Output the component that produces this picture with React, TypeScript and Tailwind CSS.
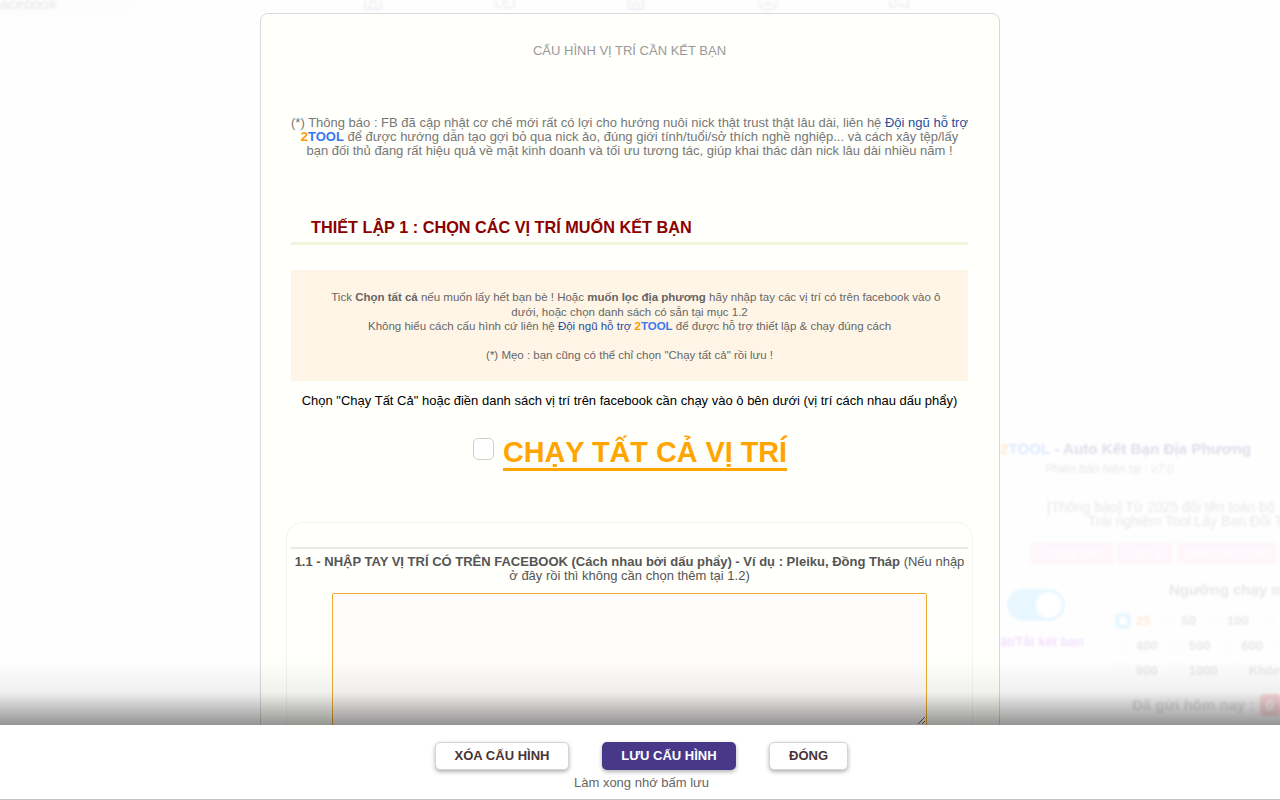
import { Home, Youtube, Store, Smile, Gamepad2 } from 'lucide-react'

const NGUONG = [
  ['25', '50', '100', '200'],
  ['400', '500', '600', '700'],
  ['900', '1000', 'Không'],
]

function NenTrang() {
  return (
    <div className="h-[800px] overflow-hidden bg-[#fefcfe] blur-[1px] opacity-[0.16]">
      <div className="h-[20px] w-[135px] rounded-br-[20px] bg-gray-100 text-[15px] leading-[8px] text-gray-500">acebook</div>
      <div className="flex justify-between w-[548px] ml-[362px] -mt-[20px] text-gray-400">
        <Home className="w-[22px] h-[22px] -mt-[10px]" />
        <Youtube className="w-[22px] h-[22px] -mt-[10px]" />
        <Store className="w-[22px] h-[22px] -mt-[10px]" />
        <Smile className="w-[22px] h-[22px] -mt-[10px]" />
        <Gamepad2 className="w-[22px] h-[22px] -mt-[10px]" />
      </div>
      <div className="w-[1280px] pl-[1000px] pt-[428px]">
        <div className="w-[500px]">
          <div className="text-[15.2px] leading-[18px] font-bold text-[#3a2a7a] whitespace-nowrap">
            <span className="text-orange-400">2</span>
            <span className="text-blue-500">TOOL</span> - Auto Kết Bạn Địa Phương
          </div>
          <div className="text-[12px] leading-[14px] italic text-gray-500 ml-[45px] mt-[4px]">Phiên bản hiện tại : v7.0</div>
          <div className="text-[14px] leading-[14px] text-gray-500 mt-[24px] ml-[47px] whitespace-nowrap">
            [Thông báo] Từ 2025 đổi tên toàn bộ tool
          </div>
          <div className="text-[14px] leading-[14px] text-gray-500 ml-[88px] whitespace-nowrap">
            Trải nghiệm Tool Lấy Bạn Đối Thủ
          </div>
          <div className="flex gap-[4px] ml-[30px] mt-[14px] text-[13px] text-white">
            <span className="bg-pink-200 w-[83px] h-[22px] flex items-center justify-center">Thông báo</span>
            <span className="bg-pink-200 w-[56px] h-[22px] flex items-center justify-center">Gợi ý</span>
            <span className="bg-pink-200 w-[100px] h-[22px] flex items-center justify-center">Danh sách bạn</span>
          </div>
          <div className="flex mt-[16px]">
            <div className="w-[115px] pl-[7px] pt-[9px]">
              <div className="w-[58px] h-[32px] rounded-full bg-sky-300 flex justify-end items-center pr-[3px]">
                <div className="w-[26px] h-[26px] rounded-full bg-white" />
              </div>
              <div className="text-[13px] font-bold text-purple-500 -ml-[7px] mt-[11px] whitespace-nowrap">ật/Tắt kết bạn</div>
            </div>
            <div className="pt-[1px]">
              <div className="text-[15px] leading-[18px] font-bold text-gray-500 ml-[54px] whitespace-nowrap">Ngưỡng chạy mỗi</div>
              <div className="flex flex-col gap-[9px] mt-[14px]">
                {NGUONG.map((hang) => (
                  <div key={hang[0]} className="flex gap-[10px] text-[13px] leading-[16px] font-bold text-gray-500">
                    {hang.map((n) =>
                      n === '25' ? (
                        <span key={n} className="flex items-center gap-[5px] text-orange-400">
                          <span className="w-[16px] h-[16px] rounded bg-sky-300 flex items-center justify-center">
                            <span className="w-[8px] h-[8px] rounded-full bg-white" />
                          </span>
                          {n}
                        </span>
                      ) : (
                        <span key={n} className="flex items-center gap-[5px]">
                          <span className="w-[16px] h-[16px] rounded bg-gray-100" />
                          {n}
                        </span>
                      ),
                    )}
                  </div>
                ))}
              </div>
            </div>
          </div>
          <div className="flex items-center gap-[5px] ml-[132px] mt-[15px] text-[15px] leading-[22px] font-bold text-gray-700 whitespace-nowrap">
            Đã gửi hôm nay : <span className="bg-red-500 text-white px-[6px] rounded">0</span>
          </div>
        </div>
      </div>
    </div>
  )
}

function HoTro() {
  return (
    <>
      <span className="text-[#1f4e9e]">Đội ngũ hỗ trợ</span>{' '}
      <span className="font-bold">
        <span className="text-[#ff9900]">2</span>
        <span className="text-[#3b78f0]">TOOL</span>
      </span>
    </>
  )
}

function NutDuoi({ chu, rong, dam }: { chu: string; rong: string; dam?: boolean }) {
  return (
    <button
      className={
        dam
          ? `h-[28px] ${rong} rounded-[5px] bg-[#47388a] text-white text-[13px] font-bold shadow-[0_2px_4px_rgba(0,0,0,0.3)]`
          : `h-[28px] ${rong} rounded-[5px] bg-white border border-[#d4d4d4] text-[#4a3434] text-[13px] font-bold shadow-[0_2px_4px_rgba(0,0,0,0.3)]`
      }
    >
      {chu}
    </button>
  )
}

export default function App() {
  return (
    <div className="relative h-[800px] w-[1280px] overflow-hidden font-['Liberation_Sans',Arial,sans-serif]">
      <NenTrang />

      {/* Modal cấu hình */}
      <div className="absolute left-[260px] top-[13px] w-[740px] h-[800px] bg-[#fffffb] border border-[#d9d9d9] rounded-[8px] pl-[30px] pr-[31px]">
        <h2 className="text-[13px] leading-[16px] text-[#999999] text-center pt-[29px]">CẤU HÌNH VỊ TRÍ CẦN KẾT BẠN</h2>

        <p className="mt-[57px] text-[13px] leading-[14px] text-[#777777] text-center">
          (*) Thông báo : FB đã cập nhật cơ chế mới rất có lợi cho hướng nuôi nick thật trust thật lâu dài, liên hệ{' '}
          <HoTro /> để được hướng dẫn tạo gợi bỏ qua nick ảo, đúng giới tính/tuổi/sở thích nghề nghiệp... và cách xây
          tệp/lấy bạn đối thủ đang rất hiệu quả về mặt kinh doanh và tối ưu tương tác, giúp khai thác dàn nick lâu dài
          nhiều năm !
        </p>

        <div className="mt-[59px] border-b-[3px] border-[#f3f4dc] pb-[5px] pl-[20px]">
          <h3 className="text-[16.25px] leading-[20px] font-bold text-[#8b0000]">THIẾT LẬP 1 : CHỌN CÁC VỊ TRÍ MUỐN KẾT BẠN</h3>
        </div>

        <div className="mt-[25px] h-[111px] bg-[#fff5e6] px-[25px] pt-[20px] text-[11.5px] leading-[14.5px] text-[#666666] text-center">
          {'\u00a0\u00a0\u00a0\u00a0'}Tick <b>Chọn tất cả</b> nếu muốn lấy hết bạn bè ! Hoặc <b>muốn lọc địa phương</b> hãy nhập tay các vị trí có
          trên facebook vào ô dưới, hoặc chọn danh sách có sẵn tại mục 1.2
          <br />
          Không hiểu cách cấu hình cứ liên hệ <HoTro /> để được hỗ trợ thiết lập &amp; chạy đúng cách
          <br />
          <br />
          (*) Mẹo : bạn cũng có thể chỉ chọn "Chạy tất cả" rồi lưu !
        </div>

        <p className="mt-[12px] text-[13px] leading-[16px] text-black text-center whitespace-nowrap">
          Chọn "Chạy Tất Cả" hoặc điền danh sách vị trí trên facebook cần chạy vào ô bên dưới (vị trí cách nhau dấu phẩy)
        </p>

        <div className="mt-[28px] flex justify-center items-start gap-[9px] pl-[1px]">
          <span className="mt-[1px] w-[21px] h-[22px] rounded-[5px] bg-white border border-[#cfcfcf]" />
          <span className="text-[28.8px] leading-[31px] font-bold text-[#ffa500] border-b-[3px] border-[#ffa500] whitespace-nowrap">
            CHẠY TẤT CẢ VỊ TRÍ
          </span>
        </div>

        <div className="mt-[51px] -mx-[5px] h-[300px] rounded-[16px] border border-[#f3f3f3] px-[4px] pt-[24px]">
          <div className="border-t-2 border-[#e9e9e9] pt-[6px] text-[13px] leading-[14px] text-[#555555] text-center">
            <b>1.1 - NHẬP TAY VỊ TRÍ CÓ TRÊN FACEBOOK (Cách nhau bởi dấu phẩy) - Ví dụ : Pleiku, Đồng Tháp</b> (Nếu nhập ở
            đây rồi thì không cần chọn thêm tại 1.2)
          </div>
          <textarea className="block mx-auto mt-[10px] w-[595px] h-[133px] bg-[#fffcfb] border border-[#f0ab2e] rounded-[2px]" />
        </div>
      </div>

      {/* Bóng mờ phía trên thanh nút */}
      <div className="absolute left-0 right-0 top-[660px] h-[65px] bg-gradient-to-b from-transparent via-[rgba(0,0,0,0.06)] to-[rgba(0,0,0,0.42)]" />

      {/* Thanh nút dưới */}
      <div className="absolute left-0 right-0 top-[725px] h-[75px] bg-white border-b border-[#c4c4c4] pt-[17px]">
        <div className="flex justify-center gap-[33px] pl-[3px]">
          <NutDuoi chu="XÓA CẤU HÌNH" rong="w-[134px]" />
          <NutDuoi chu="LƯU CẤU HÌNH" rong="w-[134px]" dam />
          <NutDuoi chu="ĐÓNG" rong="w-[79px]" />
        </div>
        <p className="mt-[5px] text-[13px] leading-[16px] text-[#666666] text-center pl-[3px]">Làm xong nhớ bấm lưu</p>
      </div>
    </div>
  )
}
